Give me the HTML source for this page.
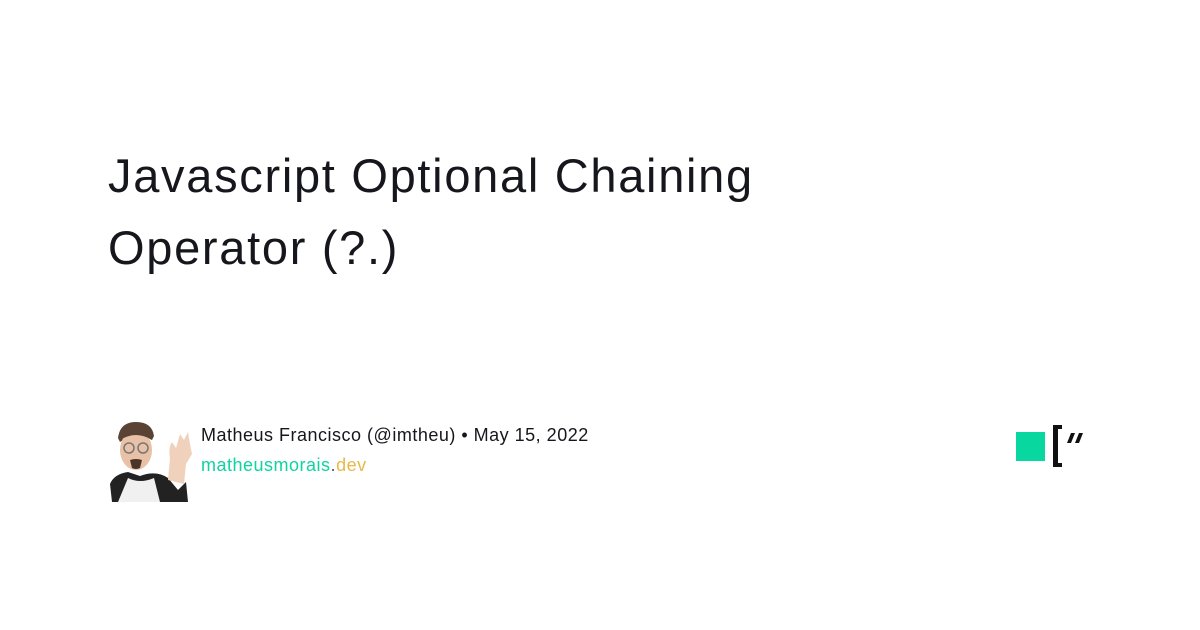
<!DOCTYPE html>
<html><head><meta charset="utf-8"><style>
html,body{margin:0;padding:0;background:#fff;width:1200px;height:630px;overflow:hidden;font-family:"Liberation Sans",sans-serif;}
.t{position:absolute;left:108px;top:140px;font-size:47px;line-height:72px;color:#16161d;letter-spacing:1.7px;}
.n{position:absolute;left:201px;top:425px;font-size:18px;color:#16161d;letter-spacing:0.5px;}
.d{position:absolute;left:201px;top:455px;font-size:18px;color:#0fd3a0;letter-spacing:0.5px;}
.d span{color:#e8b84a}
</style></head><body>
<div class="t">Javascript Optional Chaining<br>Operator (?.)</div>
<svg style="position:absolute;left:106px;top:418px" width="90" height="84" viewBox="0 0 90 84">
<path d="M6 84 L4 66 Q8 56 22 54 L34 58 Q50 52 62 60 L72 72 L80 64 L82 84Z" fill="#222"/>
<path d="M22 60 Q34 66 48 60 L54 84 L12 84Z" fill="#f0f0f0"/>
<path d="M12 20 Q14 4 30 4 Q46 4 48 18 L46 22 Q30 12 14 24Z" fill="#5a4234"/>
<ellipse cx="30" cy="32" rx="16" ry="20" fill="#e8c1a7"/>
<path d="M14 22 Q30 12 46 22 L46 16 Q30 6 14 16Z" fill="#5a4234"/>
<circle cx="23" cy="30" r="5" fill="none" stroke="#777" stroke-width="1.5"/>
<circle cx="37" cy="30" r="5" fill="none" stroke="#777" stroke-width="1.5"/>
<path d="M24 42 Q30 40 36 42 L34 50 Q30 52 26 50Z" fill="#4a3428"/>
<path d="M62 62 L64 40 Q62 30 66 24 L70 30 L74 16 L78 22 L82 14 L84 26 L86 36 L80 46 L78 66Z" fill="#f0d2bc"/>
</svg>
<div class="n">Matheus Francisco (@imtheu) • May 15, 2022</div>
<div class="d">matheusmorais<span style="color:#555">.</span><span>dev</span></div>
<div style="position:absolute;left:1016px;top:432px;width:29px;height:29px;background:#08d8a0"></div>
<div style="position:absolute;left:1053px;top:425px;width:5px;height:42px;background:#111"></div>
<div style="position:absolute;left:1053px;top:425px;width:9px;height:4px;background:#111"></div>
<div style="position:absolute;left:1053px;top:463px;width:9px;height:4px;background:#111"></div>
<svg style="position:absolute;left:1067px;top:433px" width="18" height="12"><path d="M4 0h4L4 10H0ZM12 0h4L12 10H8Z" fill="#111"/></svg>
</body></html>
